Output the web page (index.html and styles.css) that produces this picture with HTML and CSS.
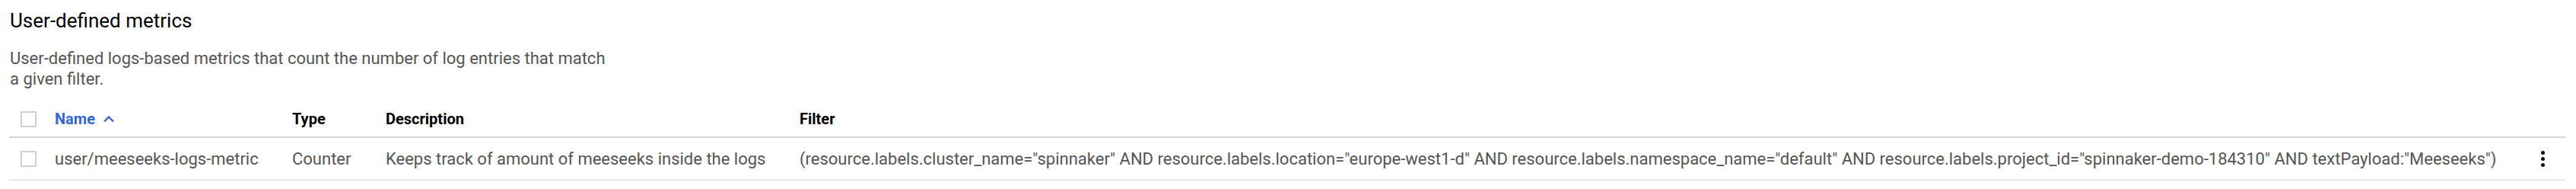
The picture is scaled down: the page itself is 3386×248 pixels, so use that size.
FILE: index.html
```html
<!DOCTYPE html>
<html lang="en">
<head>
<meta charset="utf-8">
<title>User-defined metrics</title>
<link rel="stylesheet" href="styles.css">
</head>
<body>
<section class="panel">
  <h1 class="title">User-defined metrics</h1>
  <p class="intro">User-defined logs-based metrics that count the number of log entries that match a given filter.</p>
  <div class="table" role="table">
    <div class="row head" role="row">
      <div class="cell check"><span class="box"></span></div>
      <div class="cell name sorted">Name <svg class="sort" viewBox="0 0 16 10" width="16" height="10"><path d="M2 8.5 L8 2.5 L14 8.5" fill="none" stroke="currentColor" stroke-width="2.4"/></svg></div>
      <div class="cell">Type</div>
      <div class="cell">Description</div>
      <div class="cell">Filter</div>
      <div class="cell menu"></div>
    </div>
    <div class="row body" role="row">
      <div class="cell check"><span class="box"></span></div>
      <div class="cell name">user/meeseeks-logs-metric</div>
      <div class="cell">Counter</div>
      <div class="cell">Keeps track of amount of meeseeks inside the logs</div>
      <div class="cell">(resource.labels.cluster_name="spinnaker" AND resource.labels.location="europe-west1-d" AND resource.labels.namespace_name="default" AND resource.labels.project_id="spinnaker-demo-184310" AND textPayload:"Meeseeks")</div>
      <div class="cell menu"><span class="kebab"><i></i><i></i><i></i></span></div>
    </div>
  </div>
</section>
</body>
</html>
```
FILE: styles.css
```css
html, body {
  margin: 0;
  padding: 0;
  background: #ffffff;
}
body {
  font-family: Roboto, "Liberation Sans", Arial, sans-serif;
}
.panel {
  padding: 0 14px 0 12px;
}
.title {
  margin: 0;
  padding: 10px 0 0 1px;
  font-size: 26px;
  line-height: 34px;
  font-weight: 400;
  color: #000000;
}
.intro {
  margin: 0;
  padding: 19px 0 0 1px;
  width: 792px;
  font-size: 22px;
  line-height: 27px;
  color: #555555;
}
.table {
  margin-top: 16px;
}
.row {
  display: grid;
  grid-template-columns: 60px 312px 123px 544px 1fr 60px;
  align-items: center;
}
.row.head {
  height: 46px;
  border-bottom: 2px solid #d6d6d6;
  font-size: 20px;
  font-weight: 700;
  color: #000000;
}
.row.body {
  height: 54px;
  border-bottom: 2px solid #e8e8e8;
  font-size: 22px;
  color: #555555;
}
.cell {
  white-space: nowrap;
}
.check {
  padding-left: 15px;
  display: flex;
  align-items: center;
}
.box {
  width: 17px;
  height: 17px;
  border: 2px solid #d0d0d0;
  background: #fff;
}
.sorted {
  color: #3367d6;
  display: flex;
  align-items: center;
  gap: 10px;
}
.sort {
  display: block;
}
.menu {
  display: flex;
  justify-content: center;
}
.kebab {
  display: flex;
  flex-direction: column;
  gap: 3px;
}
.kebab i {
  width: 5px;
  height: 5px;
  border-radius: 50%;
  background: #111;
}
```
